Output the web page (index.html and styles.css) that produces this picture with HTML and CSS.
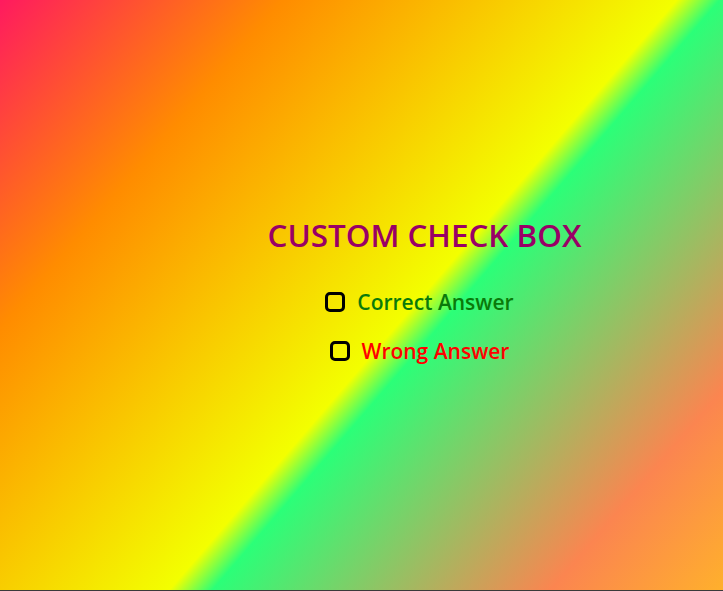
FILE: index.html
```html
<!DOCTYPE html>
<html lang="en">
<head>
<meta charset="utf-8">
<title>Custom Check Box</title>
<link rel="stylesheet" href="styles.css">
</head>
<body>
  <main class="stage">
    <div class="panel">
      <h1 class="title">CUSTOM CHECK BOX</h1>
      <label class="option option-correct">
        <input type="checkbox" class="box">
        <span class="label-text">Correct Answer</span>
      </label>
      <label class="option option-wrong">
        <input type="checkbox" class="box">
        <span class="label-text">Wrong Answer</span>
      </label>
    </div>
  </main>
</body>
</html>
```
FILE: styles.css
```css
html {
  margin: 0;
  background: #3a3a3a;
}
body {
  margin: 0;
  font-family: "Open Sans", "Noto Sans", sans-serif;
}
.stage {
  height: 590px;
  background: linear-gradient(130.7deg,
    #ff1a5f 0%,
    #ff8c00 23%,
    #f3ff00 55%,
    #2bff78 58.5%,
    #fb8550 86%,
    #ffb02c 100%);
  display: flex;
  align-items: center;
  justify-content: center;
  padding-left: 126px;
  padding-bottom: 13px;
  box-sizing: border-box;
}
.panel {
  display: flex;
  flex-direction: column;
  align-items: center;
}
.title {
  margin: 0 0 31px;
  font-size: 31.4px;
  font-weight: 600;
  color: #990066;
  line-height: 44px;
}
.option {
  display: flex;
  align-items: center;
  gap: 12px;
  font-size: 21px;
  font-weight: 600;
  line-height: 28px;
  margin-bottom: 21px;
  padding-right: 10px;
  cursor: pointer;
}
.option:last-child {
  margin-bottom: 0;
}
.option-correct {
  color: #0a7a0a;
}
.option-wrong {
  color: #ff0000;
}
.box {
  appearance: none;
  -webkit-appearance: none;
  margin: 0;
  width: 20px;
  height: 20px;
  border: 3px solid #000;
  border-radius: 5px;
  background: transparent;
  box-sizing: border-box;
}
```
